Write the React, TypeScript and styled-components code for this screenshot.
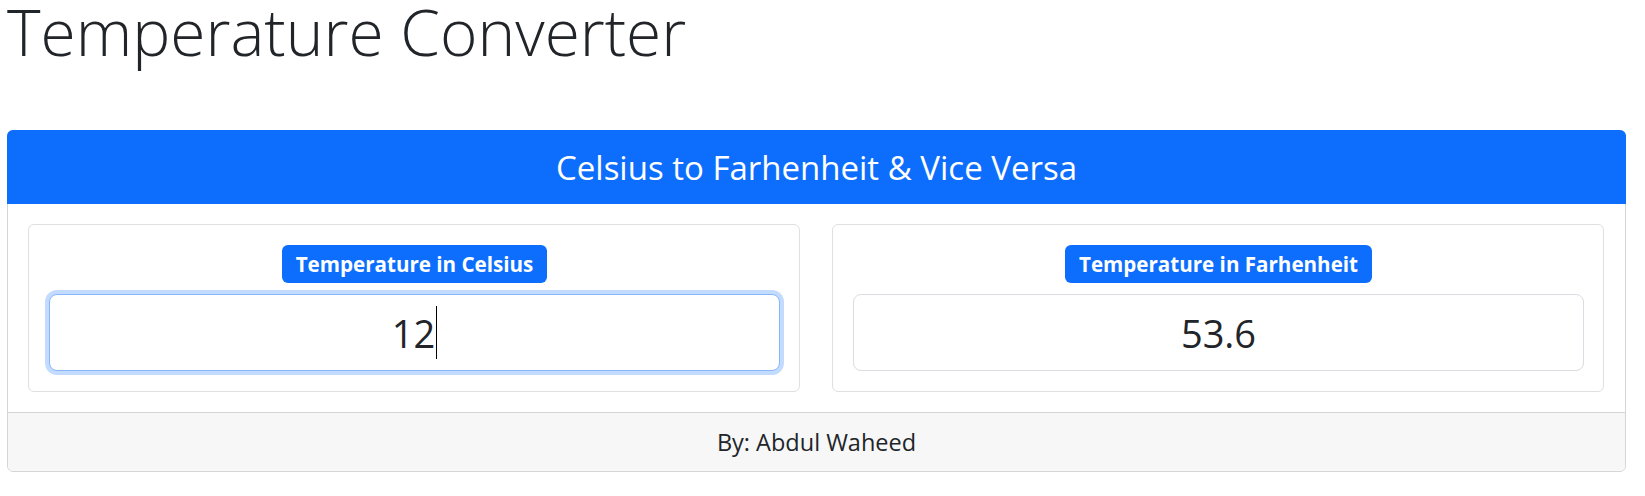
import { FC } from 'react';
import styled, { createGlobalStyle, css } from 'styled-components';

const GlobalStyle = createGlobalStyle`
    * {
        box-sizing: border-box;
    }
    body {
        margin: 0;
        background: #fff;
        color: #212529;
        font-family: "Open Sans", "Noto Sans", sans-serif;
    }
`;

const Page = styled('div')`
    padding: 0 19px 0 7px;
`;

const Title = styled('h1')`
    margin: 0 0 66px;
    font-size: 64px;
    font-weight: 300;
    line-height: 64px;
    white-space: nowrap;
`;

const Card = styled('section')`
    display: flex;
    flex-direction: column;
    border: 1px solid #d6d6d6;
    border-radius: 6px;
    background: #fff;
`;

const CardHeader = styled('header')`
    margin: -1px -1px 0;
    height: 74px;
    display: flex;
    align-items: center;
    justify-content: center;
    background: #0d6efd;
    color: #fff;
    border-radius: 6px 6px 0 0;
    font-size: 33px;
    font-weight: 400;
`;

const CardBody = styled('div')`
    display: grid;
    grid-template-columns: 1fr 1fr;
    column-gap: 32px;
    padding: 20px 21px 20px 20px;
`;

const Panel = styled('div')`
    display: flex;
    flex-direction: column;
    align-items: center;
    gap: 11px;
    padding: 20px 19px 20px 20px;
    border: 1px solid #e0e0e0;
    border-radius: 6px;
`;

const Badge = styled('span')`
    display: inline-block;
    padding: 9px 14px;
    background: #0d6efd;
    color: #fff;
    border-radius: 6px;
    font-size: 20.6px;
    font-weight: 700;
    line-height: 20px;
    white-space: nowrap;
`;

const Field = styled('div')<{ $focused?: boolean }>`
    width: 100%;
    height: 77px;
    display: flex;
    align-items: center;
    justify-content: center;
    border: 1px solid #d9dde1;
    border-radius: 8px;
    background: #fff;
    color: #212529;
    font-size: 38px;
    line-height: 60px;
    ${props => props.$focused && css`
        border-color: #86b7fe;
        box-shadow: 0 0 0 4px rgba(13, 110, 253, .25);
    `}
`;

const Caret = styled('span')`
    display: inline-block;
    width: 1px;
    height: 53px;
    margin-left: 1px;
    background: #000;
`;

const CardFooter = styled('footer')`
    height: 59px;
    display: flex;
    align-items: center;
    justify-content: center;
    border-top: 1px solid #d6d6d6;
    background: #f7f7f7;
    border-radius: 0 0 6px 6px;
    font-size: 23.5px;
`;

interface ConverterProps {
    label: string;
    value: string;
    focused?: boolean;
}

const Converter: FC<ConverterProps> = ({ label, value, focused }) => (
    <Panel>
        <Badge>{label}</Badge>
        <Field $focused={focused} role="textbox">
            {value}
            {focused && <Caret />}
        </Field>
    </Panel>
);

export default function App() {
    const celsius = 12;
    const farhenheit = Math.round((celsius * 9 / 5 + 32) * 10) / 10;

    return (
        <Page>
            <GlobalStyle />
            <Title>Temperature Converter</Title>
            <Card>
                <CardHeader>Celsius to Farhenheit &amp; Vice Versa</CardHeader>
                <CardBody>
                    <Converter label="Temperature in Celsius" value={String(celsius)} focused />
                    <Converter label="Temperature in Farhenheit" value={String(farhenheit)} />
                </CardBody>
                <CardFooter>By: Abdul Waheed</CardFooter>
            </Card>
        </Page>
    );
}
